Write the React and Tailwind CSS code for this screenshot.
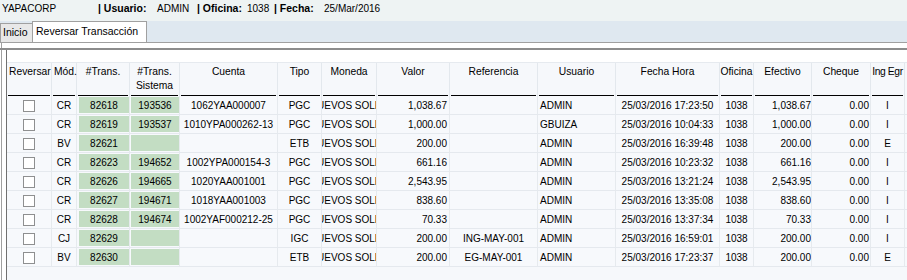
import React from 'react';

const GRID =
  'grid grid-cols-[45px_25px_53px_50px_98px_44px_55px_73px_88px_78px_104px_34px_58px_59px_34px]';

const rows = [
  ['CR', '82618', '193536', '1062YAA000007', 'PGC', '1,038.67', '', 'ADMIN', '25/03/2016 17:23:50', '1,038.67', 'I'],
  ['CR', '82619', '193537', '1010YPA000262-13', 'PGC', '1,000.00', '', 'GBUIZA', '25/03/2016 10:04:33', '1,000.00', 'I'],
  ['BV', '82621', '', '', 'ETB', '200.00', '', 'ADMIN', '25/03/2016 16:39:48', '200.00', 'E'],
  ['CR', '82623', '194652', '1002YPA000154-3', 'PGC', '661.16', '', 'ADMIN', '25/03/2016 10:23:32', '661.16', 'I'],
  ['CR', '82626', '194665', '1020YAA001001', 'PGC', '2,543.95', '', 'ADMIN', '25/03/2016 13:21:24', '2,543.95', 'I'],
  ['CR', '82627', '194671', '1018YAA001003', 'PGC', '838.60', '', 'ADMIN', '25/03/2016 13:35:08', '838.60', 'I'],
  ['CR', '82628', '194674', '1002YAF000212-25', 'PGC', '70.33', '', 'ADMIN', '25/03/2016 13:37:34', '70.33', 'I'],
  ['CJ', '82629', '', '', 'IGC', '200.00', 'ING-MAY-001', 'ADMIN', '25/03/2016 16:59:01', '200.00', 'I'],
  ['BV', '82630', '', '', 'ETB', '200.00', 'EG-MAY-001', 'ADMIN', '25/03/2016 17:23:37', '200.00', 'E'],
];

const cell = 'border-r border-[#e6eaee] flex items-center overflow-hidden whitespace-nowrap';

const HeadCell = ({ children, left }) => (
  <div className="border-r border-[#e3e8ed] flex flex-col h-[33px]">
    <div
      className={`flex-1 pt-[2px] leading-[14px] whitespace-nowrap flex flex-col ${
        left ? 'items-start pl-[2px]' : 'items-center'
      }`}
    >
      {children}
    </div>
    <div className="h-px bg-black mx-px" />
  </div>
);

const Row = ({ r }) => {
  const [mod, trans, sis, cuenta, tipo, valor, ref, user, fecha, efectivo, ie] = r;
  return (
    <div className={`${GRID} h-[19px] bg-[#f7f9fc] border-b border-[#e5e9ee]`}>
      <div className={`${cell} justify-center`}>
        <div className="w-[12px] h-[12px] border border-[#8e8f90] bg-white mt-px" />
      </div>
      <div className={`${cell} justify-center`}>{mod}</div>
      <div className={`${cell} items-stretch py-px pl-[2px]`}>
        <div className="flex-1 bg-[#c3ddc3] flex items-center justify-center">{trans}</div>
      </div>
      <div className="flex items-stretch py-px pl-px border-r border-[#e6eaee]">
        <div className="flex-1 bg-[#c3ddc3] flex items-center justify-center">{sis}</div>
      </div>
      <div className={`${cell} justify-center`}>{cuenta}</div>
      <div className={`${cell} justify-center`}>{tipo}</div>
      {/* moneda text is wider than the column and is clipped on both sides */}
      <div className={`${cell} justify-center`}>
        <span className="shrink-0">NUEVOS SOLES</span>
      </div>
      <div className={`${cell} justify-end pr-[2px]`}>{valor}</div>
      <div className={`${cell} justify-center`}>{ref}</div>
      <div className={`${cell} justify-start pl-[2px]`}>{user}</div>
      <div className={`${cell} justify-center`}>{fecha}</div>
      <div className={`${cell} justify-center`}>1038</div>
      <div className={`${cell} justify-end`}>{efectivo}</div>
      <div className={`${cell} justify-end pr-px`}>0.00</div>
      <div className={`${cell} justify-center`}>{ie}</div>
    </div>
  );
};

export default function App() {
  return (
    <div className="w-[907px] h-[280px] overflow-hidden bg-white text-black font-['Liberation_Sans',Arial,sans-serif] flex flex-col">
      {/* top info bar */}
      <div className="h-[21px] shrink-0 bg-[#eef3f3] flex items-start pt-[2px] leading-[13px] text-[10px]">
        <span className="w-[98px] pl-[2px]">YAPACORP</span>
        <span className="w-[59px] font-bold text-[10.5px]">| Usuario:</span>
        <span className="w-[40px]">ADMIN</span>
        <span className="w-[50px] font-bold text-[10.5px]">| Oficina:</span>
        <span className="w-[27px]">1038</span>
        <span className="w-[50px] font-bold text-[10.5px]">| Fecha:</span>
        <span>25/Mar/2016</span>
      </div>

      {/* tabs */}
      <div className="h-[21px] shrink-0 bg-[#dfe8f0] flex items-end text-[10.5px]">
        <div className="w-[32px] h-[19px] bg-[#e8e8e8] border border-b-0 border-r-0 border-[#a0a0a0] flex items-center pl-[2px]">
          Inicio
        </div>
        <div className="w-[115px] h-[21px] bg-white border border-b-0 border-[#a0a0a0] flex items-center pl-[3px]">
          Reversar Transacción
        </div>
      </div>
      <div className="h-px shrink-0 bg-[#a0a0a0]" />
      <div className="h-[5px] shrink-0 ml-px border-l border-[#a0a0a0] bg-white" />
      <div className="h-[2px] shrink-0 bg-[#8c8c8c]" />

      {/* grid panel */}
      <div className="flex-1 ml-px border-l border-[#a0a0a0] pl-[4px] bg-white flex">
        <div className="flex-1 border-l border-[#707070] pt-[12px] bg-white flex flex-col">
          <div className="flex-1 bg-[#f6f8fb] text-[10px]">
            <div className={`${GRID} text-[10.3px] border-t border-[#e6eaef]`}>
              <HeadCell left>Reversar</HeadCell>
              <HeadCell left>Mód.</HeadCell>
              <HeadCell>#Trans.</HeadCell>
              <HeadCell>
                <span>#Trans.</span>
                <span>Sistema</span>
              </HeadCell>
              <HeadCell>Cuenta</HeadCell>
              <HeadCell>Tipo</HeadCell>
              <HeadCell>Moneda</HeadCell>
              <HeadCell>Valor</HeadCell>
              <HeadCell>Referencia</HeadCell>
              <HeadCell>Usuario</HeadCell>
              <HeadCell>Fecha Hora</HeadCell>
              <HeadCell>Oficina</HeadCell>
              <HeadCell>Efectivo</HeadCell>
              <HeadCell>Cheque</HeadCell>
              <HeadCell>
                <span className="tracking-[-0.4px]">Ing Egr</span>
              </HeadCell>
            </div>
            {rows.map((r, i) => (
              <Row key={i} r={r} />
            ))}
          </div>
        </div>
      </div>
    </div>
  );
}
